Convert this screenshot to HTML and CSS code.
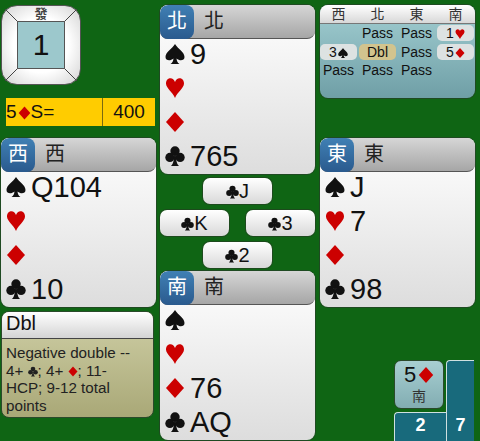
FILE: index.html
```html
<!DOCTYPE html>
<html lang="en">
<head>
    <meta charset="UTF-8">
    <title>Bridge Table</title>
    <meta name="viewport" content="width=device-width, initial-scale=1.0">
    <link rel="stylesheet" href="styles.css">
</head>
<body>

<svg class="defs" width="0" height="0">
    <symbol id="spade" viewBox="0 0 20 20"><path d="M10 0C13 5 19.5 8 19.5 13C19.5 16.5 15 17.5 11.5 14.5C11.8 17 12.5 19 14.5 20L5.5 20C7.5 19 8.2 17 8.5 14.5C5 17.5 .5 16.5 .5 13C.5 8 7 5 10 0Z"/></symbol>
    <symbol id="heart" viewBox="0 0 20 20"><path d="M10 20C7.5 14 1 10 1 5.5C1 2 3.2 .3 5.5 .3C7.5 .3 9.2 1.8 10 4C10.8 1.8 12.5 .3 14.5 .3C16.8 .3 19 2 19 5.5C19 10 12.5 14 10 20Z"/></symbol>
    <symbol id="diamond" viewBox="0 0 20 20"><path d="M10 0L19 10L10 20L1 10Z"/></symbol>
    <symbol id="club" viewBox="0 0 20 20"><circle cx="10" cy="5" r="4.7"/><circle cx="4.9" cy="11.4" r="4.6"/><circle cx="15.1" cy="11.4" r="4.6"/><path d="M9.2 6H10.8C10.8 13 11.5 18 14 20H6C8.5 18 9.2 13 9.2 6Z"/></symbol>
</svg>

<div class="table">

    <div class="column left">
        <div class="vul">
            <svg class="bevel" width="80" height="80" viewBox="0 0 80 80">
                <path d="M4 4L16 16M76 4L64 16M4 76L16 64M76 76L64 64" stroke="#444" stroke-width="1" fill="none"/>
            </svg>
            <div class="dealer">發</div>
            <div class="board">1</div>
        </div>

        <div class="contract">
            <div class="contract-name">5<svg class="sym sym-contract red"><use href="#diamond"/></svg>S=</div>
            <div class="contract-score">400</div>
        </div>

        <div class="hand west">
            <div class="hand-head"><div class="seat">西</div><div class="player">西</div></div>
            <div class="suit"><svg class="pip"><use href="#spade"/></svg>Q104</div>
            <div class="suit"><svg class="pip red"><use href="#heart"/></svg></div>
            <div class="suit"><svg class="pip red"><use href="#diamond"/></svg></div>
            <div class="suit"><svg class="pip"><use href="#club"/></svg>10</div>
        </div>

        <div class="explain">
            <div class="explain-head">Dbl</div>
            <div class="explain-body">Negative double -- 4+ <svg class="sym sym-note"><use href="#club"/></svg>; 4+ <svg class="sym sym-note red"><use href="#diamond"/></svg>; 11- HCP; 9-12 total points</div>
        </div>
    </div>

    <div class="column middle">
        <div class="hand">
            <div class="hand-head"><div class="seat">北</div><div class="player">北</div></div>
            <div class="suit"><svg class="pip"><use href="#spade"/></svg>9</div>
            <div class="suit"><svg class="pip red"><use href="#heart"/></svg></div>
            <div class="suit"><svg class="pip red"><use href="#diamond"/></svg></div>
            <div class="suit"><svg class="pip"><use href="#club"/></svg>765</div>
        </div>

        <div class="tricks">
            <div class="trick t-north"><svg class="sym sym-trick"><use href="#club"/></svg>J</div>
            <div class="trick t-west"><svg class="sym sym-trick"><use href="#club"/></svg>K</div>
            <div class="trick t-east"><svg class="sym sym-trick"><use href="#club"/></svg>3</div>
            <div class="trick t-south"><svg class="sym sym-trick"><use href="#club"/></svg>2</div>
        </div>

        <div class="hand south">
            <div class="hand-head"><div class="seat">南</div><div class="player">南</div></div>
            <div class="suit"><svg class="pip"><use href="#spade"/></svg></div>
            <div class="suit"><svg class="pip red"><use href="#heart"/></svg></div>
            <div class="suit"><svg class="pip red"><use href="#diamond"/></svg>76</div>
            <div class="suit"><svg class="pip"><use href="#club"/></svg>AQ</div>
        </div>
    </div>

    <div class="column right">
        <div class="auction">
            <div class="auction-head">
                <div>西</div><div>北</div><div>東</div><div>南</div>
            </div>
            <div class="bids">
                <div class="bid"></div>
                <div class="bid">Pass</div>
                <div class="bid">Pass</div>
                <div class="bid pill">1<svg class="sym sym-bid red"><use href="#heart"/></svg></div>
                <div class="bid pill">3<svg class="sym sym-bid"><use href="#spade"/></svg></div>
                <div class="bid pill tan">Dbl</div>
                <div class="bid">Pass</div>
                <div class="bid pill">5<svg class="sym sym-bid red"><use href="#diamond"/></svg></div>
                <div class="bid">Pass</div>
                <div class="bid">Pass</div>
                <div class="bid">Pass</div>
            </div>
        </div>

        <div class="hand east">
            <div class="hand-head"><div class="seat">東</div><div class="player">東</div></div>
            <div class="suit"><svg class="pip"><use href="#spade"/></svg>J</div>
            <div class="suit"><svg class="pip red"><use href="#heart"/></svg>7</div>
            <div class="suit"><svg class="pip red"><use href="#diamond"/></svg></div>
            <div class="suit"><svg class="pip"><use href="#club"/></svg>98</div>
        </div>

        <div class="score">
            <div class="score-left">
                <div class="last-bid">
                    <div class="last-bid-value">5<svg class="sym sym-last red"><use href="#diamond"/></svg></div>
                    <div class="last-bid-seat">南</div>
                </div>
                <div class="tally ns">2</div>
            </div>
            <div class="tally ew">7</div>
        </div>
    </div>

</div>

</body>
</html>
```

FILE: styles.css
```css
html, body {
    height: 441px;
    overflow: hidden;
}

body {
    margin: 0;
    padding: 0;
    background: #0f6514;
    font-family: 'Liberation Sans', 'Noto Sans CJK TC', sans-serif;
    color: #111;
}

.defs {
    display: block;
    height: 0;
}

svg {
    fill: currentColor;
}

.red {
    color: #cc0000;
}

/* suit symbols inside a line of text */
.sym {
    display: inline-block;
    vertical-align: -1px;
}

.sym-contract {
    width: 13px;
    height: 14px;
    margin: 0 0 -1px 1px;
}

.sym-trick {
    width: 13px;
    height: 14px;
}

.sym-bid {
    width: 10px;
    height: 10px;
    margin-left: 1px;
}

.sym-note {
    width: 10px;
    height: 11px;
    vertical-align: -1px;
}

.sym-last {
    width: 16px;
    height: 16px;
    margin-left: 2px;
}

.table {
    display: flex;
    gap: 4px;
    padding: 5px 0 0 1px;
}

.column {
    width: 155px;
    display: flex;
    flex-direction: column;
}

.right {
    margin-left: 1px;
}

/* board number box */
.vul {
    position: relative;
    box-sizing: border-box;
    width: 80px;
    height: 80px;
    border-radius: 16px;
    border: 1px solid #555;
    background: radial-gradient(circle, #ffffff 50%, #d2d2d2 100%);
    padding-top: 15px;
    display: flex;
    justify-content: center;
}

.bevel {
    position: absolute;
    top: -1px;
    left: -1px;
}

.dealer {
    position: absolute;
    top: 0;
    left: 0;
    right: 0;
    text-align: center;
    font-size: 13px;
    line-height: 16px;
    font-weight: bold;
    color: #444;
}

.board {
    box-sizing: border-box;
    width: 48px;
    height: 48px;
    background: #9cc8cc;
    border: 1px solid #555;
    text-align: center;
    font-size: 30px;
    line-height: 46px;
}

.contract {
    display: flex;
    height: 28px;
    margin: 13px 1px 0 5px;
    background: #ffcc00;
    font-size: 19px;
    line-height: 28px;
}

.contract-name {
    flex: 1;
}

.contract-score {
    width: 52px;
    border-left: 1px solid #7a6a10;
    text-align: center;
}

/* hands */
.hand {
    box-sizing: border-box;
    height: 169px;
    box-shadow: 0 0 0 1px #1f4a22;
    border-radius: 8px;
    background: linear-gradient(#ffffff, #dddddd);
    overflow: hidden;
}

.west {
    margin-top: 12px;
}

.east {
    margin-top: 40px;
}

.south {
    margin-top: 3px;
}

.hand-head {
    display: flex;
    height: 34px;
    margin-bottom: -2px;
    background: linear-gradient(#d6d6d6, #a6a6a6);
    border-bottom: 1px solid #555;
    border-radius: 0 0 8px 8px;
    box-sizing: border-box;
}

.seat {
    width: 34px;
    height: 34px;
    flex-shrink: 0;
    border-radius: 8px;
    background: linear-gradient(#4080b4, #2a5a8e);
    color: #fff;
    text-align: center;
    font-size: 20px;
    line-height: 32px;
}

.player {
    margin-left: 10px;
    font-size: 20px;
    line-height: 32px;
    color: #222;
}

.suit {
    display: flex;
    align-items: center;
    height: 34px;
    font-size: 29px;
}

.pip {
    width: 20px;
    height: 20px;
    margin: 0 5px 0 5px;
    flex-shrink: 0;
}

/* cards played */
.tricks {
    display: grid;
    grid-template-columns: 69px 69px;
    justify-content: space-between;
    grid-template-rows: 26px 26px 26px;
    row-gap: 6px;
    margin-top: 4px;
}

.trick {
    border-radius: 7px;
    background: linear-gradient(#ffffff, #d8d8d8);
    box-shadow: 0 0 0 1px #1d4a1d;
    text-align: center;
    font-size: 20px;
    line-height: 26px;
}

.t-north, .t-south {
    grid-column: 1 / 3;
    justify-self: center;
    width: 69px;
}

/* auction */
.auction {
    height: 93px;
    box-shadow: 0 0 0 1px #1f4a22;
    border-radius: 8px;
    background: linear-gradient(#a2ced2, #6f9fa6);
    overflow: hidden;
}

.auction-head {
    display: grid;
    grid-template-columns: repeat(4, 39px);
    height: 18px;
    margin-left: -1px;
    background: linear-gradient(#ffffff, #d8d8d8);
    border-bottom: 1px solid #777;
    text-align: center;
    font-size: 14px;
    line-height: 18px;
    color: #333;
}

.bids {
    display: grid;
    grid-template-columns: repeat(4, 39px);
    grid-auto-rows: 18.5px;
    margin-left: -1px;
    font-size: 14px;
    text-align: center;
}

.bid {
    line-height: 18px;
}

.pill {
    margin: 1px;
    height: 16px;
    line-height: 16px;
    border-radius: 5px;
    background: #dde2e2;
}

.tan {
    background: #d2c48e;
}

/* bid explanation */
.explain {
    box-sizing: border-box;
    width: 153px;
    height: 107px;
    margin-top: 4px;
    border: 1px solid #2b4a2b;
    border-radius: 8px;
    overflow: hidden;
    background: linear-gradient(#cfcfa6, #a9a877);
}

.explain-head {
    height: 26px;
    padding-left: 4px;
    background: linear-gradient(#ffffff, #d4d4d4);
    border-bottom: 1px solid #444;
    font-size: 20px;
    line-height: 22px;
}

.explain-body {
    padding: 5px 8px 0 4px;
    font-size: 15.2px;
    line-height: 17.7px;
    color: #222;
}

/* tricks won */
.score {
    display: flex;
    justify-content: flex-end;
    align-items: flex-end;
    height: 81px;
    margin-top: 53px;
    padding-right: 1px;
}

.score-left {
    display: flex;
    flex-direction: column;
    width: 52px;
}

.last-bid {
    box-sizing: border-box;
    width: 50px;
    height: 49px;
    margin-bottom: 3px;
    border-radius: 7px;
    border: 1px solid #2b4a2b;
    background: linear-gradient(#a8cfd2, #82adb2);
    text-align: center;
}

.last-bid-value {
    font-size: 22px;
    line-height: 26px;
    margin-top: 1px;
}

.last-bid-seat {
    font-size: 14px;
    line-height: 17px;
    color: #333;
}

.tally {
    box-sizing: border-box;
    background: #186a7c;
    border-top: 1px solid #cfe0e0;
    border-left: 1px solid #cfe0e0;
    border-radius: 4px 0 0 0;
    color: #fff;
    font-size: 18px;
    font-weight: bold;
    text-align: center;
}

.ns {
    height: 29px;
    line-height: 25px;
}

.ew {
    display: flex;
    align-items: flex-end;
    justify-content: center;
    width: 28px;
    height: 81px;
    padding-bottom: 4px;
    line-height: 24px;
}
```
